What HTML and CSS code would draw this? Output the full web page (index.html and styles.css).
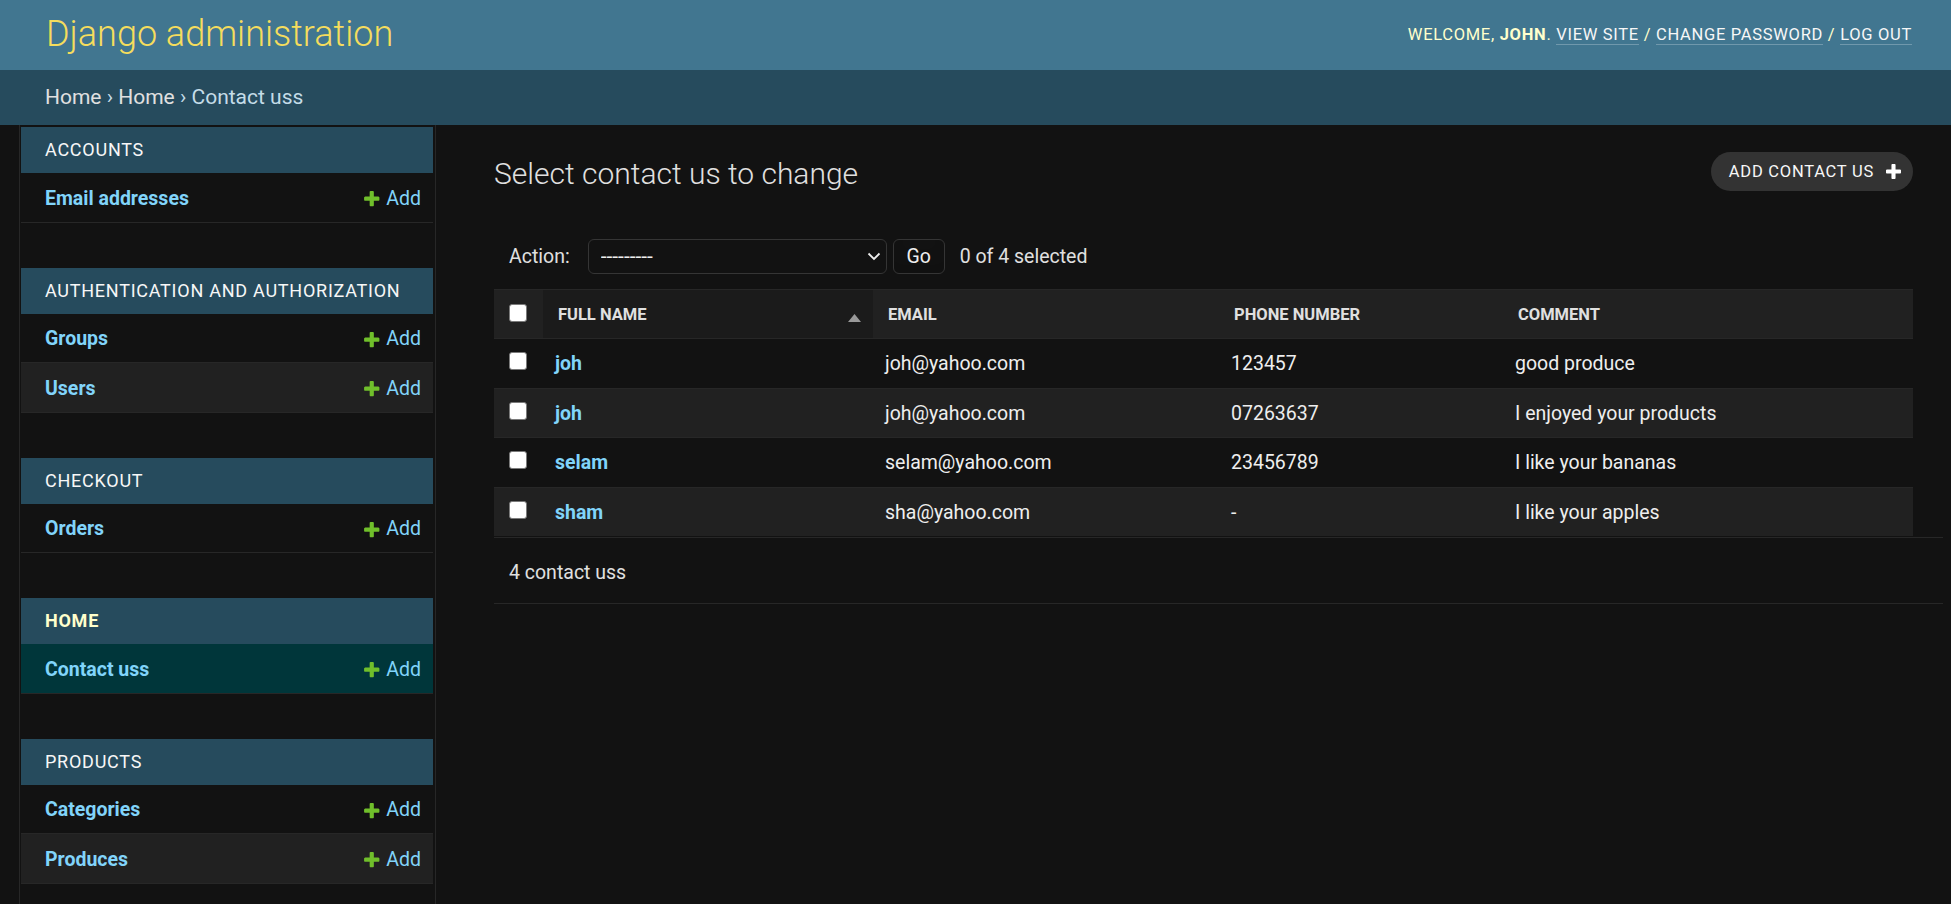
FILE: index.html
```html
<!DOCTYPE html>
<html lang="en">
<head>
<meta charset="utf-8">
<title>Select contact us to change | Django site admin</title>
<link rel="stylesheet" href="styles.css">
</head>
<body>
<header class="header">
  <div class="branding"><h1 class="site-name"><a href="#">Django administration</a></h1></div>
  <div class="user-tools">Welcome, <strong>john</strong>. <a href="#">View site</a> / <a href="#">Change password</a> / <a href="#">Log out</a></div>
</header>
<nav class="breadcrumbs"><a href="#">Home</a> &rsaquo; <a href="#">Home</a> &rsaquo; Contact uss</nav>
<div class="main">
  <button class="toggle-nav" aria-label="Toggle navigation"></button>
  <aside class="sidebar">
    <section class="module">
      <h2 class="caption"><a href="#">Accounts</a></h2>
      <div class="row"><a class="model" href="#">Email addresses</a><span class="add"><a href="#"><svg class="plus" viewBox="0 0 1792 1792"><path d="M1600 796v192q0 40-28 68t-68 28h-416v416q0 40-28 68t-68 28h-192q-40 0-68-28t-28-68v-416h-416q-40 0-68-28t-28-68v-192q0-40 28-68t68-28h416v-416q0-40 28-68t68-28h192q40 0 68 28t28 68v416h416q40 0 68 28t28 68z"/></svg>Add</a></span></div>
    </section>
    <section class="module">
      <h2 class="caption"><a href="#">Authentication and Authorization</a></h2>
      <div class="row"><a class="model" href="#">Groups</a><span class="add"><a href="#"><svg class="plus" viewBox="0 0 1792 1792"><path d="M1600 796v192q0 40-28 68t-68 28h-416v416q0 40-28 68t-68 28h-192q-40 0-68-28t-28-68v-416h-416q-40 0-68-28t-28-68v-192q0-40 28-68t68-28h416v-416q0-40 28-68t68-28h192q40 0 68 28t28 68v416h416q40 0 68 28t28 68z"/></svg>Add</a></span></div>
      <div class="row"><a class="model" href="#">Users</a><span class="add"><a href="#"><svg class="plus" viewBox="0 0 1792 1792"><path d="M1600 796v192q0 40-28 68t-68 28h-416v416q0 40-28 68t-68 28h-192q-40 0-68-28t-28-68v-416h-416q-40 0-68-28t-28-68v-192q0-40 28-68t68-28h416v-416q0-40 28-68t68-28h192q40 0 68 28t28 68v416h416q40 0 68 28t28 68z"/></svg>Add</a></span></div>
    </section>
    <section class="module">
      <h2 class="caption"><a href="#">Checkout</a></h2>
      <div class="row"><a class="model" href="#">Orders</a><span class="add"><a href="#"><svg class="plus" viewBox="0 0 1792 1792"><path d="M1600 796v192q0 40-28 68t-68 28h-416v416q0 40-28 68t-68 28h-192q-40 0-68-28t-28-68v-416h-416q-40 0-68-28t-28-68v-192q0-40 28-68t68-28h416v-416q0-40 28-68t68-28h192q40 0 68 28t28 68v416h416q40 0 68 28t28 68z"/></svg>Add</a></span></div>
    </section>
    <section class="module current-app">
      <h2 class="caption"><a href="#">Home</a></h2>
      <div class="row current-model"><a class="model" href="#">Contact uss</a><span class="add"><a href="#"><svg class="plus" viewBox="0 0 1792 1792"><path d="M1600 796v192q0 40-28 68t-68 28h-416v416q0 40-28 68t-68 28h-192q-40 0-68-28t-28-68v-416h-416q-40 0-68-28t-28-68v-192q0-40 28-68t68-28h416v-416q0-40 28-68t68-28h192q40 0 68 28t28 68v416h416q40 0 68 28t28 68z"/></svg>Add</a></span></div>
    </section>
    <section class="module">
      <h2 class="caption"><a href="#">Products</a></h2>
      <div class="row"><a class="model" href="#">Categories</a><span class="add"><a href="#"><svg class="plus" viewBox="0 0 1792 1792"><path d="M1600 796v192q0 40-28 68t-68 28h-416v416q0 40-28 68t-68 28h-192q-40 0-68-28t-28-68v-416h-416q-40 0-68-28t-28-68v-192q0-40 28-68t68-28h416v-416q0-40 28-68t68-28h192q40 0 68 28t28 68v416h416q40 0 68 28t28 68z"/></svg>Add</a></span></div>
      <div class="row"><a class="model" href="#">Produces</a><span class="add"><a href="#"><svg class="plus" viewBox="0 0 1792 1792"><path d="M1600 796v192q0 40-28 68t-68 28h-416v416q0 40-28 68t-68 28h-192q-40 0-68-28t-28-68v-416h-416q-40 0-68-28t-28-68v-192q0-40 28-68t68-28h416v-416q0-40 28-68t68-28h192q40 0 68 28t28 68v416h416q40 0 68 28t28 68z"/></svg>Add</a></span></div>
    </section>
  </aside>
  <main class="content">
    <div class="title-row">
      <h1>Select contact us to change</h1>
      <a class="object-add" href="#">Add contact us<svg class="plus-white" viewBox="192 192 1408 1408"><path d="M1600 796v192q0 40-28 68t-68 28h-416v416q0 40-28 68t-68 28h-192q-40 0-68-28t-28-68v-416h-416q-40 0-68-28t-28-68v-192q0-40 28-68t68-28h416v-416q0-40 28-68t68-28h192q40 0 68 28t28 68v416h416q40 0 68 28t28 68z"/></svg></a>
    </div>
    <form class="changelist">
      <div class="actions">
        <label for="action">Action:</label>
        <span class="select-wrap">
          <select id="action" class="select"><option>---------</option><option>Delete selected contact uss</option></select>
          <svg class="chevron" viewBox="0 0 14 9"><polyline points="1.5,1.5 7,7 12.5,1.5"/></svg>
        </span>
        <button type="button" class="go">Go</button>
        <span class="counter">0 of 4 selected</span>
      </div>
      <table class="results">
        <colgroup>
          <col class="c-check"><col class="c-name"><col class="c-email"><col class="c-phone"><col class="c-comment">
        </colgroup>
        <thead>
          <tr>
            <th class="th-check"><div class="th-inner"><input type="checkbox" class="cb cb-head"></div></th>
            <th class="sorted"><div class="th-inner"><span>Full name</span><svg class="sort-arrow" viewBox="0 0 13 8"><polygon points="0,8 6.5,0 13,8"/></svg></div></th>
            <th><div class="th-inner"><span>Email</span></div></th>
            <th><div class="th-inner"><span>Phone number</span></div></th>
            <th><div class="th-inner"><span>Comment</span></div></th>
          </tr>
        </thead>
        <tbody>
          <tr>
            <td class="td-check"><input type="checkbox" class="cb"></td>
            <th class="field-name"><a href="#">joh</a></th>
            <td>joh@yahoo.com</td>
            <td>123457</td>
            <td>good produce</td>
          </tr>
          <tr>
            <td class="td-check"><input type="checkbox" class="cb"></td>
            <th class="field-name"><a href="#">joh</a></th>
            <td>joh@yahoo.com</td>
            <td>07263637</td>
            <td>I enjoyed your products</td>
          </tr>
          <tr>
            <td class="td-check"><input type="checkbox" class="cb"></td>
            <th class="field-name"><a href="#">selam</a></th>
            <td>selam@yahoo.com</td>
            <td>23456789</td>
            <td>I like your bananas</td>
          </tr>
          <tr>
            <td class="td-check"><input type="checkbox" class="cb"></td>
            <th class="field-name"><a href="#">sham</a></th>
            <td>sha@yahoo.com</td>
            <td>-</td>
            <td>I like your apples</td>
          </tr>
        </tbody>
      </table>
      <p class="paginator">4 contact uss</p>
    </form>
  </main>
</div>
</body>
</html>
```

FILE: styles.css
```css
* { box-sizing: border-box; }
html, body { margin: 0; padding: 0; }
body {
  background: #121212;
  color: #eeeeee;
  font-family: Roboto, "Liberation Sans", Arial, sans-serif;
  font-size: 21px;
}
a { text-decoration: none; color: #81d4fa; }

/* Header */
.header {
  height: 70px;
  background: #417690;
  display: flex;
  align-items: center;
  justify-content: space-between;
  padding: 0 39px 0 46px;
}
.site-name {
  margin: 0 0 2px;
  font-size: 36px;
  font-weight: 300;
  line-height: 42px;
}
.site-name a { color: #f5dd5d; }
.user-tools {
  font-size: 16.5px;
  line-height: 20px;
  letter-spacing: 0.7px;
  text-transform: uppercase;
  color: #ffffcc;
}
.user-tools strong { font-weight: 700; }
.user-tools a {
  color: #f7f7f7;
  border-bottom: 1px solid rgba(255, 255, 255, 0.25);
}

/* Breadcrumbs */
.breadcrumbs {
  height: 55px;
  line-height: 55px;
  background: #264b5d;
  padding: 0 45px;
  font-size: 21px;
  color: #c4dce8;
}
.breadcrumbs a { color: #e0e0e0; }

/* Main layout */
.main {
  display: flex;
  min-height: 779px;
}
.toggle-nav {
  flex: 0 0 20px;
  border: 0;
  border-right: 1px solid #272727;
  background: #121212;
  padding: 0;
}
.sidebar {
  flex: 0 0 416px;
  padding: 2px 2px 0 1px;
  border-right: 1px solid #272727;
}
.module { margin-bottom: 45px; }
.caption {
  margin: 0;
  height: 46px;
  padding: 12px 24px;
  background: #264b5d;
  font-size: 18px;
  line-height: 22px;
  font-weight: 400;
  letter-spacing: 0.75px;
  text-transform: uppercase;
}
.caption a { color: #f7f7f7; }
.current-app .caption a { color: #ffffcc; font-weight: 700; }
.row {
  display: flex;
  border-bottom: 1px solid #272727;
  font-size: 19.5px;
  line-height: 24.5px;
}
.row:nth-of-type(even) { background: #212121; }
.row.current-model { background: #00363a; }
.model {
  flex: 1;
  padding: 13.5px 24px 10.5px;
  font-weight: 700;
}
.add {
  flex: 0 0 83px;
  padding: 13.5px 12px 10.5px 13px;
}
.add a { display: flex; align-items: center; }
.plus {
  width: 19.5px;
  height: 19.5px;
  fill: #70bf2b;
  margin-right: 4.5px;
}

/* Content */
.content {
  flex: 1;
  min-width: 0;
  padding: 27px 38px 0 58px;
}
.title-row {
  display: flex;
  justify-content: space-between;
  align-items: flex-start;
  margin-bottom: 32px;
}
.title-row h1 {
  margin: 4px 0 0;
  font-size: 30px;
  font-weight: 300;
  line-height: 35px;
  color: #e0e0e0;
}
.object-add {
  display: flex;
  align-items: center;
  height: 39px;
  padding: 0 12px 0 18px;
  border-radius: 20px;
  background: #333333;
  color: #f7f7f7;
  font-size: 16.5px;
  letter-spacing: 0.75px;
  text-transform: uppercase;
}
.plus-white {
  width: 15px;
  height: 15px;
  fill: #ffffff;
  margin-left: 12px;
}

/* Actions */
.actions {
  display: flex;
  align-items: center;
  height: 66px;
  padding: 15px;
  font-size: 19.5px;
  color: #e0e0e0;
}
.actions label { margin-right: 18px; }
.select-wrap {
  position: relative;
  display: block;
  width: 299px;
  height: 35px;
}
.select {
  appearance: none;
  -webkit-appearance: none;
  width: 100%;
  height: 35px;
  border: 1px solid #353535;
  border-radius: 6px;
  background: #121212;
  color: #eeeeee;
  font-family: Roboto, "Liberation Sans", Arial, sans-serif;
  font-size: 21px;
  padding: 0 0 0 12px;
  margin: 0;
}
.chevron {
  position: absolute;
  right: 6px;
  top: 13px;
  width: 14px;
  height: 9px;
  fill: none;
  stroke: #eeeeee;
  stroke-width: 1.8;
  pointer-events: none;
}
.go {
  margin-left: 6px;
  height: 35px;
  width: 52px;
  padding: 0;
  border: 1px solid #353535;
  border-radius: 6px;
  background: #121212;
  box-shadow: 0 -15px 20px -10px rgba(0, 0, 0, 0.15) inset;
  color: #eeeeee;
  font-family: Roboto, "Liberation Sans", Arial, sans-serif;
  font-size: 19.5px;
}
.counter { margin-left: 15px; }

/* Results table */
.results {
  width: 100%;
  table-layout: fixed;
  border-collapse: separate;
  border-spacing: 0;
}
.c-check { width: 49px; }
.c-name { width: 330px; }
.c-email { width: 346px; }
.c-phone { width: 284px; }
.results thead th {
  padding: 0;
  background: #212121;
  border-top: 1px solid #272727;
  border-bottom: 1px solid #272727;
  color: #e0e0e0;
  font-size: 16.5px;
  font-weight: 700;
  text-transform: uppercase;
  text-align: left;
  white-space: nowrap;
}
.results thead th.sorted { background: #1b1b1b; }
.th-inner {
  height: 48px;
  display: flex;
  align-items: center;
  justify-content: space-between;
  padding: 0 12px 0 15px;
}
.th-check .th-inner { padding: 0 0 3px 15px; }
.sort-arrow {
  width: 13px;
  height: 8px;
  fill: #999999;
  margin-top: 7px;
}
.results tbody td,
.results tbody th {
  padding: 13px 12px 11px;
  font-size: 19.5px;
  line-height: 24.5px;
  font-weight: 400;
  text-align: left;
  vertical-align: top;
  color: #eeeeee;
  border-bottom: 1px solid #272727;
}
.results tbody tr:nth-child(even) td,
.results tbody tr:nth-child(even) th { background: #212121; }
.results tbody tr:last-child td,
.results tbody tr:last-child th { border-bottom: 0; }
.results tbody .field-name a { font-weight: 700; }
.results tbody .td-check { padding: 12px 0 12px 15px; }
.cb {
  appearance: none;
  -webkit-appearance: none;
  display: block;
  width: 18px;
  height: 18px;
  margin: 1px 0 0;
  background: #ffffff;
  border: 1.5px solid #7a7a7a;
  border-radius: 3px;
}
.cb-head { margin: 0; }

.paginator {
  margin: 1px -30px 0 0;
  padding: 18px 15px 13px;
  line-height: 34px;
  font-size: 19.5px;
  color: #e0e0e0;
  border-top: 1px solid #272727;
  border-bottom: 1px solid #272727;
}
```
